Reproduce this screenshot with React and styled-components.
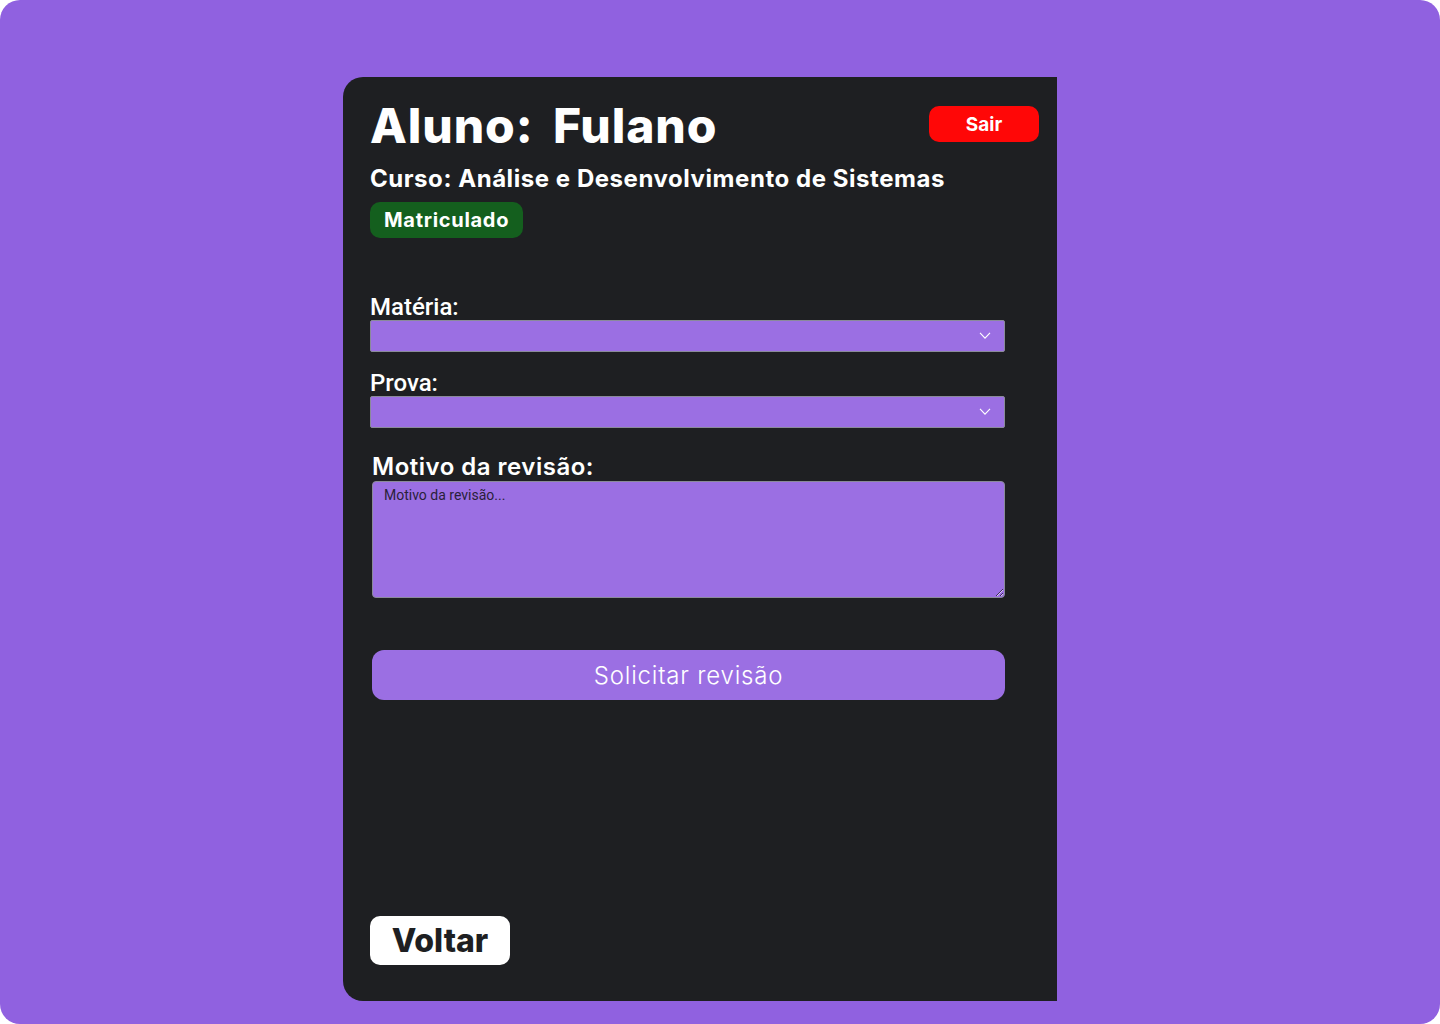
import React from 'react';
import styled, { createGlobalStyle } from 'styled-components';

const GlobalStyle = createGlobalStyle`
  html, body {
    margin: 0;
    padding: 0;
    background: #ffffff;
  }
  * {
    box-sizing: border-box;
  }
`;

const Page = styled.div`
  width: 1440px;
  height: 1024px;
  background-color: #9061e0;
  border-radius: 20px;
  padding: 77px 0 0 343px;
`;

const Card = styled.div`
  width: 714px;
  height: 924px;
  background-color: #1e1f22;
  border-radius: 20px 0 0 20px;
  padding: 27px 18px 36px 27px;
  display: flex;
  flex-direction: column;
  font-family: Inter, 'Noto Sans', sans-serif;
  color: #ffffff;
`;

const HeaderRow = styled.div`
  display: flex;
  justify-content: space-between;
  align-items: flex-start;
`;

const Title = styled.h1`
  margin: 0;
  font-size: 48px;
  font-weight: 800;
  line-height: 44px;
  letter-spacing: 0.9px;
  word-spacing: 8px;
`;

const ExitButton = styled.button`
  width: 110px;
  height: 36px;
  margin-top: 2px;
  background-color: #ff0707;
  color: #ffffff;
  border: none;
  border-radius: 10px;
  font-family: Inter, sans-serif;
  font-size: 19px;
  font-weight: 700;
  cursor: pointer;
`;

const Course = styled.h2`
  margin: 16px 0 0;
  font-size: 24px;
  font-weight: 700;
  line-height: 30px;
  letter-spacing: 0.55px;
`;

const Badge = styled.span`
  align-self: flex-start;
  margin-top: 8px;
  height: 36px;
  padding: 0 14px;
  display: flex;
  align-items: center;
  background-color: #145f1e;
  border-radius: 10px;
  font-size: 20px;
  font-weight: 700;
  letter-spacing: 0.7px;
`;

const Form = styled.div`
  display: flex;
  flex-direction: column;
  margin-top: 56px;
  width: 635px;
`;

const FieldLabel = styled.label`
  font-family: Roboto, sans-serif;
  font-size: 24px;
  font-weight: 500;
  line-height: 26px;
  margin-top: ${(p) => p.$top || 0}px;
`;

const SelectBox = styled.div`
  position: relative;
  height: 32px;
  background-color: #9b6fe3;
  border: 1px solid #8a8a9a;
  border-radius: 2px;
`;

const Chevron = styled.svg`
  position: absolute;
  right: 13px;
  top: 11px;
`;

const ReasonLabel = styled.label`
  margin: 25px 0 0 2px;
  font-size: 24px;
  font-weight: 600;
  line-height: 28px;
  letter-spacing: 0.5px;
`;

const ReasonInput = styled.textarea`
  margin-left: 2px;
  height: 117px;
  width: 633px;
  background-color: #9b6fe3;
  border: 1px solid #8a8a9a;
  border-radius: 4px;
  padding: 5px 11px;
  font-family: Roboto, sans-serif;
  font-size: 14px;
  color: #1e1f22;
  resize: vertical;
  outline: none;
  &::placeholder {
    color: #2a1f3a;
  }
`;

const SubmitButton = styled.button`
  margin: 52px 0 0 2px;
  width: 633px;
  height: 50px;
  background-color: #9b6fe3;
  border: none;
  border-radius: 12px;
  color: #ffffff;
  font-family: Inter, sans-serif;
  font-size: 24px;
  font-weight: 300;
  letter-spacing: 0.8px;
  cursor: pointer;
`;

const BackButton = styled.button`
  margin-top: auto;
  align-self: flex-start;
  width: 140px;
  height: 49px;
  background-color: #ffffff;
  border: none;
  border-radius: 10px;
  color: #1e1f22;
  font-family: Inter, sans-serif;
  font-size: 32px;
  font-weight: 800;
  cursor: pointer;
`;

function Select() {
  return (
    <SelectBox>
      <Chevron width="12" height="7" viewBox="0 0 12 7" fill="none">
        <path d="M1 0.8l5 5.4L11 0.8" stroke="#ffffff" strokeWidth="1.1" />
      </Chevron>
    </SelectBox>
  );
}

function App() {
  return (
    <>
      <GlobalStyle />
      <Page>
        <Card>
          <HeaderRow>
            <Title>Aluno: Fulano</Title>
            <ExitButton>Sair</ExitButton>
          </HeaderRow>
          <Course>Curso: Análise e Desenvolvimento de Sistemas</Course>
          <Badge>Matriculado</Badge>

          <Form>
            <FieldLabel>Matéria:</FieldLabel>
            <Select />
            <FieldLabel $top={18}>Prova:</FieldLabel>
            <Select />
            <ReasonLabel>Motivo da revisão:</ReasonLabel>
            <ReasonInput placeholder="Motivo da revisão..." />
            <SubmitButton>Solicitar revisão</SubmitButton>
          </Form>

          <BackButton>Voltar</BackButton>
        </Card>
      </Page>
    </>
  );
}

export default App;
